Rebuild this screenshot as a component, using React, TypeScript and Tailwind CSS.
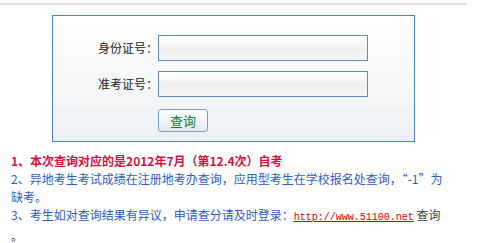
import React from 'react';

const cjk = "font-['Noto_Sans_CJK_SC','Liberation_Sans',sans-serif]";

function Field({ label }: { label: string }) {
  return (
    <div className="flex items-center">
      <label className="w-[105px] pr-0 text-right text-[12px] text-[#222] leading-none">{label}</label>
      <input
        type="text"
        className="h-[26px] w-[210px] border border-[#5a8cbf] bg-[linear-gradient(to_bottom,#ffffff_0%,#f6f6f6_35%,#eeeeee_55%,#f7f7f7_100%)] outline-none"
      />
    </div>
  );
}

export default function App() {
  return (
    <div className={`w-[478px] h-[243px] bg-white overflow-hidden ${cjk}`}>
      <div className="mt-[3px] h-[2px] w-[467px] bg-[#e3e3e3]" />
      <div className="ml-[52px] mt-[10px] h-[127px] w-[363px] border border-[#4c86bd] bg-[linear-gradient(to_bottom,#ffffff_0%,#f8f9fa_40%,#edf1f4_100%)] pt-[19px]">
        <div className="flex flex-col gap-[10px]">
          <Field label="身份证号：" />
          <Field label="准考证号：" />
          <div className="pl-[105px]">
            <button className="h-[23px] w-[50px] rounded-[3px] border border-[#7e98c0] bg-[linear-gradient(to_bottom,#ffffff_0%,#f1f3f6_60%,#e3e8ee_100%)] text-[13px] leading-none text-[#1a7a33]">
              查询
            </button>
          </div>
        </div>
      </div>
      <div className="mt-[10px] pl-[11px] text-[12px] leading-[18px] whitespace-nowrap">
        <div className="font-bold text-[#d4123f]">1、本次查询对应的是2012年7月（第12.4次）自考</div>
        <div className="text-[#2f5bc4]">2、异地考生考试成绩在注册地考办查询，应用型考生在学校报名处查询，“-1”为</div>
        <div className="text-[#2f5bc4]">缺考。</div>
        <div className="text-[#2f5bc4]">
          3、考生如对查询结果有异议，申请查分请及时登录：
          <a href="#" className="font-['Liberation_Mono',monospace] text-[10px] text-[#cc0000] underline">http://www.51100.net</a>
          <span className="text-[#444]"> 查询</span>
        </div>
        <div className="text-[#444]">。</div>
      </div>
    </div>
  );
}
